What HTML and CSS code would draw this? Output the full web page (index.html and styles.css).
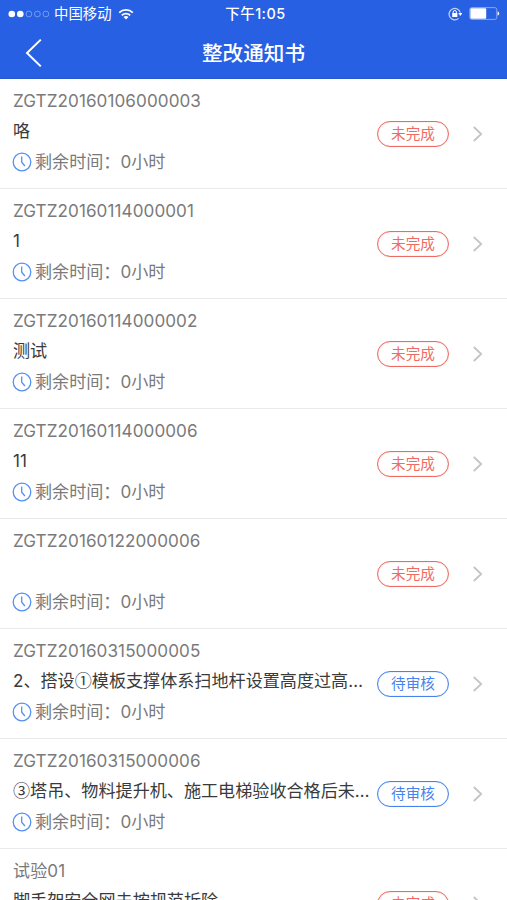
FILE: index.html
```html
<!DOCTYPE html>
<html lang="zh-CN">
<head>
    <meta charset="UTF-8">
    <meta name="viewport" content="width=device-width, initial-scale=1.0">
    <title>整改通知书</title>
    <link rel="stylesheet" href="styles.css">
</head>
<body>
    <!-- 图标 -->
    <svg class="sprite" width="0" height="0">
        <symbol id="clock" viewBox="0 0 20 20">
            <circle cx="10" cy="10" r="8.8"/>
            <path d="M9.7 4.6v5.6l3.2 3.8"/>
        </symbol>
        <symbol id="arrow" viewBox="0 0 12 18">
            <path d="M1.8 2l7.4 7-7.4 7"/>
        </symbol>
    </svg>

    <div class="header">
        <!-- 状态栏 -->
        <div class="status-bar">
            <div class="carrier">
                <svg class="signal" width="42" height="8" viewBox="0 0 42 8">
                    <circle class="on" cx="3.8" cy="4" r="3.3"/>
                    <circle class="on" cx="12.3" cy="4" r="3.3"/>
                    <circle cx="20.9" cy="4" r="2.9"/>
                    <circle cx="29.4" cy="4" r="2.9"/>
                    <circle cx="37.9" cy="4" r="2.9"/>
                </svg>
                <span>中国移动</span>
                <svg class="wifi" width="16" height="12" viewBox="0 0 16 12">
                    <path d="M1.2 4.6a9.8 9.8 0 0 1 13.6 0"/>
                    <path d="M3.8 7.3a6.1 6.1 0 0 1 8.4 0"/>
                    <path class="dot" d="M8 11.6L5.5 9.1a3.6 3.6 0 0 1 5 0z"/>
                </svg>
            </div>
            <div class="clock-time">下午1:05</div>
            <div class="power">
                <svg width="14" height="14" viewBox="0 0 14 14">
                    <path class="ring" d="M10.6 11.4A5.7 5.7 0 1 1 12.3 5.6"/>
                    <path class="fill" d="M10.3 6.1h4L12.3 9z"/>
                    <rect class="fill" x="4.2" y="6.1" width="5.2" height="4" rx=".5"/>
                    <path class="shackle" d="M5.2 6.3V5.1a1.6 1.6 0 0 1 3.2 0v1.2"/>
                </svg>
                <svg width="31" height="13" viewBox="0 0 31 13">
                    <rect class="case" x=".8" y=".6" width="27" height="11.8" rx="2"/>
                    <rect class="fill" x="1.4" y="1.2" width="15.8" height="10.6" rx="1"/>
                    <path class="fill" d="M28.6 4.4c2.2.7 2.2 3.5 0 4.2z"/>
                </svg>
            </div>
        </div>
        <!-- 标题栏 -->
        <div class="nav-bar">
            <svg class="back" width="18" height="30" viewBox="0 0 18 30">
                <path d="M15.8 1.6L2 15l13.8 13.4"/>
            </svg>
            <h1>整改通知书</h1>
        </div>
    </div>

    <!-- 通知列表 -->
    <ul class="list">
        <li class="item">
            <div class="info">
                <p class="code">ZGTZ20160106000003</p>
                <p class="name">咯</p>
                <p class="time"><svg class="clock"><use href="#clock"/></svg>剩余时间：0小时</p>
            </div>
            <span class="tag undone">未完成</span>
            <svg class="arrow"><use href="#arrow"/></svg>
        </li>
        <li class="item">
            <div class="info">
                <p class="code">ZGTZ20160114000001</p>
                <p class="name">1</p>
                <p class="time"><svg class="clock"><use href="#clock"/></svg>剩余时间：0小时</p>
            </div>
            <span class="tag undone">未完成</span>
            <svg class="arrow"><use href="#arrow"/></svg>
        </li>
        <li class="item">
            <div class="info">
                <p class="code">ZGTZ20160114000002</p>
                <p class="name">测试</p>
                <p class="time"><svg class="clock"><use href="#clock"/></svg>剩余时间：0小时</p>
            </div>
            <span class="tag undone">未完成</span>
            <svg class="arrow"><use href="#arrow"/></svg>
        </li>
        <li class="item">
            <div class="info">
                <p class="code">ZGTZ20160114000006</p>
                <p class="name">11</p>
                <p class="time"><svg class="clock"><use href="#clock"/></svg>剩余时间：0小时</p>
            </div>
            <span class="tag undone">未完成</span>
            <svg class="arrow"><use href="#arrow"/></svg>
        </li>
        <li class="item">
            <div class="info">
                <p class="code">ZGTZ20160122000006</p>
                <p class="name"></p>
                <p class="time"><svg class="clock"><use href="#clock"/></svg>剩余时间：0小时</p>
            </div>
            <span class="tag undone">未完成</span>
            <svg class="arrow"><use href="#arrow"/></svg>
        </li>
        <li class="item">
            <div class="info">
                <p class="code">ZGTZ20160315000005</p>
                <p class="name">2、搭设<span class="cjk">①</span>模板支撑体系扫地杆设置高度过高…</p>
                <p class="time"><svg class="clock"><use href="#clock"/></svg>剩余时间：0小时</p>
            </div>
            <span class="tag review">待审核</span>
            <svg class="arrow"><use href="#arrow"/></svg>
        </li>
        <li class="item">
            <div class="info">
                <p class="code">ZGTZ20160315000006</p>
                <p class="name"><span class="cjk">③</span>塔吊、物料提升机、施工电梯验收合格后未…</p>
                <p class="time"><svg class="clock"><use href="#clock"/></svg>剩余时间：0小时</p>
            </div>
            <span class="tag review">待审核</span>
            <svg class="arrow"><use href="#arrow"/></svg>
        </li>
        <li class="item">
            <div class="info">
                <p class="code">试验01</p>
                <p class="name">脚手架安全网未按规范拆除</p>
                <p class="time"><svg class="clock"><use href="#clock"/></svg>剩余时间：0小时</p>
            </div>
            <span class="tag undone">未完成</span>
            <svg class="arrow"><use href="#arrow"/></svg>
        </li>
    </ul>
</body>
</html>
```
FILE: styles.css
```css
* {
    box-sizing: border-box;
    margin: 0;
    padding: 0;
}

body {
    height: 900px;
    overflow: hidden;
    background: #fff;
    font-family: Inter, "Noto Sans CJK SC", sans-serif;
    font-size: 17.1px;
}

svg {
    display: block;
    flex: none;
    fill: none;
}

.sprite {
    position: absolute;
}

.header {
    height: 79px;
    background: #2860e3;
    border-bottom: 1px solid #2558cf;
    color: #fff;
}

/* 状态栏 */
.status-bar {
    display: grid;
    grid-template-columns: 1fr auto 1fr;
    align-items: center;
    height: 27px;
    padding: 0 7px 0 8px;
    font-size: 14.4px;
    line-height: 27px;
}

.carrier {
    display: flex;
    align-items: center;
    gap: 4px;
}

.signal circle {
    stroke: #86a8f5;
    stroke-width: 0.8;
}

.signal .on {
    fill: #fff;
    stroke: none;
}

.wifi {
    margin-left: 2px;
}

.wifi path {
    stroke: #fff;
    stroke-width: 1.8;
}

.wifi .dot {
    fill: #fff;
    stroke: none;
}

.clock-time {
    padding-left: 3px;
    font-weight: 500;
    letter-spacing: 0.5px;
}

.power {
    display: flex;
    align-items: center;
    justify-content: flex-end;
    gap: 7px;
}

.power .ring {
    stroke: #c3d4fa;
    stroke-width: 1.2;
}

.power .shackle {
    stroke: #fff;
    stroke-width: 1;
}

.power .case {
    stroke: #86a8f5;
    stroke-width: 1;
}

.power .fill {
    fill: #fff;
}

/* 标题栏 */
.nav-bar {
    display: grid;
    grid-template-columns: 60px 1fr 60px;
    align-items: center;
    height: 50px;
}

.back {
    margin-left: 25px;
}

.back path {
    stroke: #fff;
    stroke-width: 2;
}

.nav-bar h1 {
    padding-top: 2px;
    font-size: 20.6px;
    font-weight: 500;
    line-height: 50px;
    text-align: center;
}

/* 列表 */
.list {
    list-style: none;
}

.item {
    display: flex;
    align-items: center;
    height: 110px;
    padding: 0 23px 0 13px;
    border-bottom: 1px solid #eaeaea;
}

.info {
    flex: 1;
    min-width: 0;
    padding-bottom: 5px;
}

.info p {
    height: 30px;
    line-height: 30px;
    white-space: nowrap;
}

.code,
.time {
    color: #7a7a7a;
}

.info .code {
    letter-spacing: 0.08px;
}

.info .name {
    height: 31px;
    line-height: 29px;
    color: #3a3a3a;
}

.cjk {
    font-family: "Noto Sans CJK SC", sans-serif;
    line-height: 1;
}

.time {
    display: flex;
    align-items: center;
}

.clock {
    width: 20px;
    height: 20px;
    margin-left: -1px;
    margin-right: 3px;
    stroke: #5590f2;
    stroke-width: 1.3;
}

.tag {
    flex: none;
    width: 72px;
    height: 26px;
    border: 1px solid;
    border-radius: 13px;
    box-shadow: inset 0 0 1px;
    font-size: 14.6px;
    line-height: 25px;
    text-align: center;
}

.undone {
    color: #ef6b62;
}

.review {
    color: #4683ee;
}

.arrow {
    width: 12px;
    height: 18px;
    margin-left: 23px;
    stroke: #c4c4c8;
    stroke-width: 1.8;
}
```
